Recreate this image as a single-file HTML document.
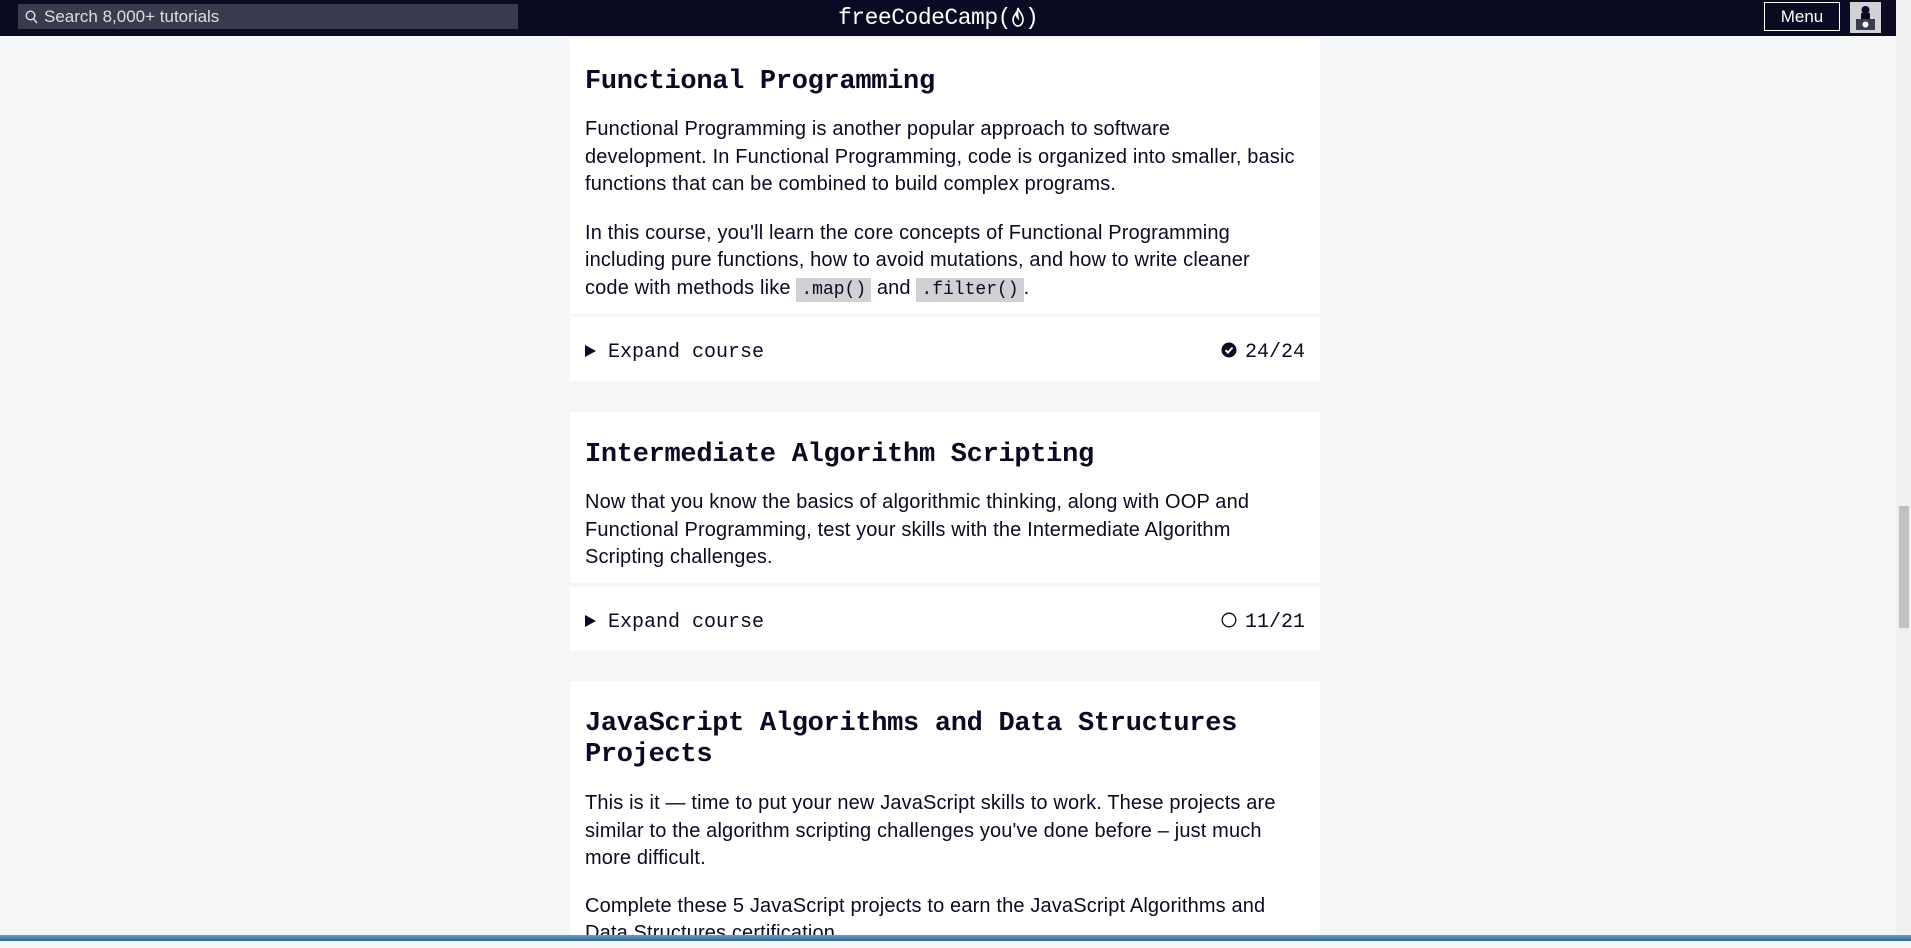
<!DOCTYPE html>
<html><head><meta charset="utf-8"><style>
*{margin:0;padding:0;box-sizing:border-box}
html,body{width:1911px;height:941px;overflow:hidden;background:#f5f6f7;color:#0a0a23;font-family:"Liberation Sans",sans-serif}
.nav{position:absolute;left:0;top:0;width:1896px;height:36px;background:#0a0a23}
.search{position:absolute;left:18px;top:4px;width:500px;height:25px;background:#3b3b4f;color:#dfdfe2;font-size:17px;line-height:25px;padding-left:26px}
.search svg{position:absolute;left:7px;top:6px}
.logo{position:absolute;left:838px;top:3px;font-family:"Liberation Mono",monospace;font-size:23px;color:#fff;line-height:30px;letter-spacing:-0.5px}
.menu{position:absolute;left:1764px;top:2px;width:76px;height:29px;border:1px solid #fff;color:#fff;font-size:17px;text-align:center;line-height:27px}
.av{position:absolute;left:1850px;top:2px;width:31px;height:31px;background:#d0d0d5}
.sb{position:absolute;left:1896px;top:0;width:15px;height:935px;background:#f0f0f0}
.thumb{position:absolute;left:1899px;top:506px;width:10px;height:122px;background:#c1c1c1}
.card{position:absolute;left:570px;width:750px;background:#fff;padding:0 15px}
h2{font-family:"Liberation Mono",monospace;font-weight:bold;font-size:27px;line-height:31px;letter-spacing:-0.3px}
p{font-size:20px;line-height:27.5px;white-space:nowrap;letter-spacing:0.15px}
code{font-family:"Liberation Mono",monospace;background:#d0d0d5;font-size:18px;padding:2px 5px;letter-spacing:0}
.row{position:absolute;left:570px;width:750px;height:64px;background:#fff;font-family:"Liberation Mono",monospace;font-size:20px;line-height:72px;padding:0 15px}
.row .t{display:inline-block;width:0;height:0;border-left:11px solid #0a0a23;border-top:6.5px solid transparent;border-bottom:6.5px solid transparent;margin-right:12px;vertical-align:0}
.row .r{position:absolute;right:15px;top:0}
.task{position:absolute;left:0;top:935px;width:1911px;height:6px;background:linear-gradient(#6a9ec4,#2d6a98)}
</style></head><body>
<div class="nav">
 <div class="search"><svg width="13" height="14" viewBox="0 0 13 14"><circle cx="5.5" cy="5.5" r="4.3" fill="none" stroke="#dfdfe2" stroke-width="1.4"/><path d="M8.6 9l3.4 4" stroke="#dfdfe2" stroke-width="1.5"/></svg>Search 8,000+ tutorials</div>
 <div class="logo">freeCodeCamp(<svg width="14" height="20" viewBox="0 0 14 20" style="vertical-align:-3px"><path d="M7 1C8 5 12 7 12 12.5 12 16.5 9.5 19 7 19 4.5 19 2 16.5 2 12.5 2 9.5 4 8 5 6 5.5 9 6 10 7 11 6.5 8 6 5 7 1Z" fill="none" stroke="#fff" stroke-width="1.6"/></svg>)</div>
 <div class="menu">Menu</div>
 <div class="av"><svg width="31" height="31" viewBox="0 0 31 31"><circle cx="15.5" cy="8" r="4" fill="#0a0a23"/><rect x="11" y="11" width="9" height="6" fill="#0a0a23"/><rect x="6" y="17" width="19" height="11" fill="#3b3b4f"/><circle cx="15.5" cy="22.5" r="3" fill="#fff"/></svg></div>
</div>
<div class="card" style="top:39px;height:275px;padding-top:28px">
 <h2>Functional Programming</h2>
 <p style="margin-top:18px">Functional Programming is another popular approach to software<br>development. In Functional Programming, code is organized into smaller, basic<br>functions that can be combined to build complex programs.</p>
 <p style="margin-top:21px">In this course, you'll learn the core concepts of Functional Programming<br>including pure functions, how to avoid mutations, and how to write cleaner<br>code with methods like <code>.map()</code> and <code>.filter()</code>.</p>
</div>
<div class="row" style="top:317px"><span class="t"></span>Expand course<span class="r"><svg width="16" height="16" viewBox="0 0 16 16" style="vertical-align:-1px;margin-right:8px"><circle cx="8" cy="8" r="7.5" fill="#0a0a23"/><path d="M4.5 8.2l2.4 2.4 4.6-5" fill="none" stroke="#fff" stroke-width="2"/></svg>24/24</span></div>
<div class="card" style="top:412px;height:171px;padding-top:28px">
 <h2>Intermediate Algorithm Scripting</h2>
 <p style="margin-top:18px">Now that you know the basics of algorithmic thinking, along with OOP and<br>Functional Programming, test your skills with the Intermediate Algorithm<br>Scripting challenges.</p>
</div>
<div class="row" style="top:587px"><span class="t"></span>Expand course<span class="r"><svg width="16" height="16" viewBox="0 0 16 16" style="vertical-align:-1px;margin-right:8px"><circle cx="8" cy="8" r="6.8" fill="none" stroke="#0a0a23" stroke-width="1.3"/></svg>11/21</span></div>
<div class="card" style="top:681px;height:260px;padding-top:28px">
 <h2>JavaScript Algorithms and Data Structures<br>Projects</h2>
 <p style="margin-top:19px">This is it — time to put your new JavaScript skills to work. These projects are<br>similar to the algorithm scripting challenges you've done before – just much<br>more difficult.</p>
 <p style="margin-top:20px">Complete these 5 JavaScript projects to earn the JavaScript Algorithms and<br>Data Structures certification.</p>
</div>
<div class="sb"></div><div class="thumb"></div>
<div class="task"></div>
</body></html>
